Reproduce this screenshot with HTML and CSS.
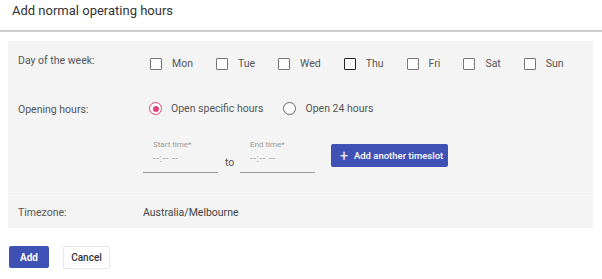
FILE: index.html
```html
<!DOCTYPE html>
<html>
<head>
<meta charset="utf-8">
<link rel="stylesheet" href="styles.css">
</head>
<body>
<div class="dialog">
  <div class="header">Add normal operating hours</div>
  <div class="panel">
    <div class="row row-days">
      <div class="label">Day of the week:</div>
      <div class="content days">
        <label class="day"><span class="box"></span>Mon</label>
        <label class="day"><span class="box"></span>Tue</label>
        <label class="day"><span class="box"></span>Wed</label>
        <label class="day"><span class="box dark"></span>Thu</label>
        <label class="day"><span class="box"></span>Fri</label>
        <label class="day"><span class="box"></span>Sat</label>
        <label class="day"><span class="box"></span>Sun</label>
      </div>
    </div>
    <div class="row row-hours">
      <div class="label">Opening hours:</div>
      <div class="content">
        <div class="radios">
          <label class="radio"><span class="circle on"><span class="dot"></span></span>Open specific hours</label>
          <label class="radio"><span class="circle"></span>Open 24 hours</label>
        </div>
        <div class="times">
          <div class="field">
            <div class="flabel">Start time*</div>
            <div class="fvalue">--:-- --</div>
          </div>
          <div class="to">to</div>
          <div class="field">
            <div class="flabel">End time*</div>
            <div class="fvalue">--:-- --</div>
          </div>
          <button class="btn-slot"><span class="plus">+</span>Add another timeslot</button>
        </div>
      </div>
    </div>
    <div class="row row-tz">
      <div class="label">Timezone:</div>
      <div class="content tz">Australia/Melbourne</div>
    </div>
  </div>
  <div class="footer">
    <button class="btn-add">Add</button>
    <button class="btn-cancel">Cancel</button>
  </div>
</div>
</body>
</html>
```
FILE: styles.css
```css
* { box-sizing: border-box; }
body {
  margin: 0;
  background: #fff;
  font-family: Roboto, "Liberation Sans", sans-serif;
  color: #444;
}
.dialog { width: 602px; }
.header {
  height: 32px;
  padding: 3px 12px 0;
  font-size: 13px;
  color: #333;
  border-bottom: 2px solid #cfcfcf;
}
.panel {
  margin: 9px 9px 0 8px;
  background: #f4f4f4;
}
.row {
  display: flex;
  font-size: 10.5px;
}
.label {
  width: 135px;
  padding-left: 10px;
  color: #555;
}
.content { flex: 1; }
.row-days { height: 44px; padding-top: 12px; }
.row-days .label { padding-top: 1px; }
.days { display: flex; align-items: flex-start; padding-left: 7px; padding-top: 4px; }
.day {
  display: flex;
  align-items: center;
  margin-right: 23px;
  color: #555;
}
.box {
  width: 12px;
  height: 12px;
  border: 1px solid #777;
  border-radius: 1px;
  margin-right: 10px;
  background: #fff;
}
.box.dark { border: 1.5px solid #222; }
.row-hours { height: 111px; border-bottom: 1px solid #fafafa; padding-top: 17px; }
.row-hours .label { padding-top: 1px; }
.radios { display: flex; padding-left: 6px; }
.radio {
  display: flex;
  align-items: center;
  margin-right: 20px;
  color: #555;
}
.circle {
  width: 13px;
  height: 13px;
  border: 1.5px solid #666;
  border-radius: 50%;
  margin-right: 9px;
  display: flex;
  align-items: center;
  justify-content: center;
  background: #fff;
}
.circle.on { border-color: #e0427a; }
.dot { width: 6px; height: 6px; border-radius: 50%; background: #e0427a; }
.times { display: flex; align-items: flex-start; margin-top: 24px; }
.field {
  width: 75px;
  height: 34px;
  border-bottom: 1px solid #999;
  padding-left: 10px;
}
.flabel { font-size: 8px; color: #999; margin-top: 1px; }
.fvalue { font-size: 10px; color: #aaa; margin-top: 4px; letter-spacing: 0.5px; }
.to { width: 22px; padding-left: 7px; padding-top: 17px; font-size: 10.5px; color: #555; }
.btn-slot {
  margin-left: 16px;
  margin-top: 5px;
  width: 117px;
  height: 23px;
  background: #3f51b5;
  color: #fff;
  border: none;
  border-radius: 2px;
  font-family: Roboto, "Liberation Sans", sans-serif;
  font-size: 9.5px;
  font-weight: 500;
  display: flex;
  align-items: center;
  padding: 0 0 0 9px;
}
.plus { font-size: 14px; font-weight: 400; margin-right: 6px; line-height: 1; }
.row-tz { height: 32px; align-items: center; }
.tz { color: #444; }
.footer { display: flex; padding: 18px 0 0 9px; }
.btn-add {
  width: 40px;
  height: 22px;
  background: #3f51b5;
  color: #fff;
  border: none;
  border-radius: 2px;
  font-family: Roboto, "Liberation Sans", sans-serif;
  font-size: 10px;
  font-weight: 700;
}
.btn-cancel {
  margin-left: 14px;
  width: 47px;
  height: 23px;
  background: #fff;
  color: #333;
  border: 1px solid #e6e6e6;
  border-radius: 2px;
  font-family: Roboto, "Liberation Sans", sans-serif;
  font-size: 10px;
  font-weight: 500;
}
```
